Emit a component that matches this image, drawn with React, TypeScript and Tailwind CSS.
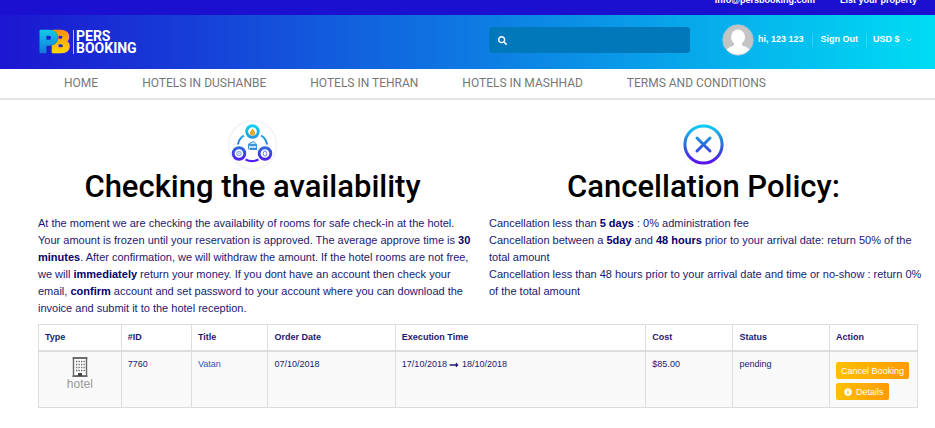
import React from 'react';
import { ChevronDown } from 'lucide-react';
import { FaInfoCircle, FaLongArrowAltRight, FaSearch } from 'react-icons/fa';

const navLinks = ['Home', 'Hotels in Dushanbe', 'Hotels in Tehran', 'Hotels in Mashhad', 'Terms and Conditions'];

const Logo: React.FC = () => (
  <a href="#" className="flex items-center gap-[3px] text-white">
    <svg width="30" height="26" viewBox="0 0 30 26" className="overflow-visible" aria-hidden="true">
      <defs>
        <linearGradient id="logoP" x1="0" y1="0" x2="0" y2="1">
          <stop offset="0.2" stopColor="#12c4e6" />
          <stop offset="1" stopColor="#1462dc" />
        </linearGradient>
        <linearGradient id="logoB" x1="0" y1="0" x2="0" y2="1">
          <stop offset="0.2" stopColor="#ff9310" />
          <stop offset="0.8" stopColor="#ffd500" />
        </linearGradient>
      </defs>
      <g fontFamily="Roboto, sans-serif" fontWeight="700" fontSize="29" strokeWidth="2.500" strokeLinejoin="round">
        <text x="11" y="23" fill="url(#logoB)" stroke="url(#logoB)">B</text>
        <text x="-1" y="23" fill="url(#logoP)" stroke="url(#logoP)">P</text>
      </g>
    </svg>
    <span className="border-l border-white/70 pl-[2px] font-[Roboto,sans-serif] text-[14px] font-bold leading-[12px]">
      PERS
      <br />
      BOOKING
    </span>
  </a>
);

const Avatar: React.FC = () => (
  <svg width="32" height="32" viewBox="0 0 32 32" aria-hidden="true">
    <defs>
      <clipPath id="avatarClip">
        <circle cx="16" cy="16" r="15" />
      </clipPath>
    </defs>
    <circle cx="16" cy="16" r="15" fill="#c4c4c4" />
    <g clipPath="url(#avatarClip)" fill="#fff">
      <ellipse cx="16" cy="13" rx="7" ry="7.5" />
      <path d="M12 17h8v4.500c5 1.300 8 3.500 9 8V34H3v-4.500c1-4.500 4-6.700 9-8z" />
    </g>
    <circle cx="16" cy="16" r="15.300" fill="none" stroke="#b9c9d0" strokeWidth="0.800" />
  </svg>
);

const NetworkIcon: React.FC = () => (
  <svg width="50" height="50" viewBox="0 0 50 50" fill="none" aria-hidden="true">
    <defs>
      <linearGradient id="network" gradientUnits="userSpaceOnUse" x1="0" y1="5" x2="0" y2="43">
        <stop offset="0" stopColor="#10d4f2" />
        <stop offset="0.550" stopColor="#2a70d8" />
        <stop offset="1" stopColor="#5a10f0" />
      </linearGradient>
    </defs>
    <circle cx="24.500" cy="25" r="24" stroke="#f5f5f8" strokeWidth="2" />
    <g stroke="url(#network)" strokeWidth="2.900">
      <circle cx="24.500" cy="11.500" r="5.800" />
      <circle cx="11" cy="33.500" r="5.800" />
      <circle cx="37" cy="33.500" r="5.800" />
      <path d="M16 15.500c-3.500 2-5.500 5-6 9M33 15.500c3.500 2 5.500 5 6 9M17.500 39.500c4 2 9 2 13 0" strokeWidth="2" />
    </g>
    <path d="M24.500 8.500l2.500 3.500a2.700 2.700 0 1 1-5 0z" fill="#e5a72c" />
    <path d="M20.500 24l5-2.500 3 2.500v5h-8z" fill="#bfe2f5" stroke="#3b9ae0" />
    <path d="M21 25h7M22 29h7" stroke="#2478ce" strokeWidth="1.500" />
    <circle cx="11" cy="33.500" r="2.300" fill="#cfe0fa" stroke="#83a6e6" />
    <ellipse cx="37" cy="33.500" rx="1.800" ry="2.500" stroke="#6f80e4" />
  </svg>
);

const CancelIcon: React.FC = () => (
  <svg width="50" height="50" viewBox="0 0 50 50" fill="none" aria-hidden="true">
    <defs>
      <linearGradient id="cancel" gradientUnits="userSpaceOnUse" x1="0" y1="5" x2="0" y2="45">
        <stop offset="0" stopColor="#10d0f2" />
        <stop offset="0.500" stopColor="#2b6ad8" />
        <stop offset="1" stopColor="#5d08f0" />
      </linearGradient>
    </defs>
    <circle cx="24.500" cy="24.500" r="23.500" stroke="#f7f7f9" />
    <circle cx="24.500" cy="24.500" r="18.600" stroke="url(#cancel)" strokeWidth="3" />
    <path d="M18 18l13 13M31 18l-13 13" stroke="url(#cancel)" strokeWidth="3" strokeLinecap="round" />
  </svg>
);

const HotelIcon: React.FC = () => (
  <svg width="16" height="20" viewBox="0 0 16 20" aria-hidden="true">
    <path d="M1.500 1h13v18h-13z" fill="#fff" stroke="#666" strokeWidth="1.400" />
    <path d="M0.500 1h15M0.500 19.200h15" stroke="#666" strokeWidth="1.500" />
    <path d="M4 4.500h9M4 7.500h9M4 10.500h9M4 13.500h9" stroke="#666" strokeWidth="1.300" strokeDasharray="1.300 1.200" />
    <path d="M6 16h4v3H6z" fill="#444" />
  </svg>
);

const Header: React.FC = () => (
  <header>
    <div className="flex h-[15px] items-start justify-end gap-[25px] overflow-hidden bg-[#1c10d0] pr-[18px] text-[9px] font-bold leading-[10px] text-white">
      <a href="#" className="-mt-[5px]">info@persbooking.com</a>
      <a href="#" className="-mt-[5px]">List your property</a>
    </div>

    <div className="flex h-[54px] items-center justify-between bg-linear-to-r/srgb from-[#1c16d0] to-[#00dcf4] pl-10 pr-[22px]">
      <Logo />
      <div className="flex items-center gap-8 pb-1">
        <label className="flex h-[26px] w-[201px] items-center gap-2 rounded-[3px] bg-[#0078ba] px-[9px] text-white">
          <FaSearch size={9} />
          <input type="search" aria-label="Search" className="min-w-0 flex-1 bg-transparent text-[9px] outline-none" />
        </label>
        <div className="flex items-center text-[9px] font-bold text-white">
          <a href="#" className="flex items-center gap-1 pr-2">
            <Avatar />
            hi, 123 123
          </a>
          <a href="#" className="border-l border-white/20 px-2">Sign Out</a>
          <div className="flex items-center border-l border-white/20 pl-[6px]">
            <select aria-label="Currency" className="w-8 appearance-none bg-transparent outline-none">
              <option>USD $</option>
            </select>
            <ChevronDown size={8} />
          </div>
        </div>
      </div>
    </div>

    <nav className="flex h-[31px] items-center gap-11 border-b-2 border-[#e4e4e4] pb-px pl-16 font-[Roboto,sans-serif] text-[12px] uppercase text-[#777]">
      {navLinks.map((link) => (
        <a key={link} href="#" className="whitespace-nowrap">{link}</a>
      ))}
    </nav>
  </header>
);

interface InfoBlockProps {
  icon: React.ReactNode;
  title: string;
  children: React.ReactNode;
}

const InfoBlock: React.FC<InfoBlockProps> = ({ icon, title, children }) => (
  <section>
    <div className="flex justify-center">{icon}</div>
    <h2 className="text-center font-[Roboto,sans-serif] text-[31px] font-medium leading-[34px] text-black">{title}</h2>
    <div className="-mr-[10px] mt-[11px] text-[11px] leading-[17px] [&_b]:text-[#06006c]">{children}</div>
  </section>
);

const BookingTable: React.FC = () => (
  <table className="w-full table-fixed border-collapse text-left text-[9px] leading-[14px]">
    <colgroup>
      <col className="w-[9.400%]" />
      <col className="w-[8%]" />
      <col className="w-[8.700%]" />
      <col className="w-[14.500%]" />
      <col className="w-[28.500%]" />
      <col className="w-[9.900%]" />
      <col className="w-[11%]" />
      <col className="w-[10%]" />
    </colgroup>
    <thead>
      <tr className="border-b-2 border-[#ddd]">
        {['Type', '#ID', 'Title', 'Order Date', 'Execution Time', 'Cost', 'Status', 'Action'].map((name) => (
          <th key={name} className="border-x border-t border-[#ddd] px-[6px] pb-[6px] pt-[5px]">{name}</th>
        ))}
      </tr>
    </thead>
    <tbody>
      <tr className="bg-[#f9f9f9] align-top *:border *:border-[#ddd] *:px-[6px] *:pb-[7px] *:pt-[5px]">
        <td>
          <div className="flex flex-col items-center text-[12px] text-[#999]">
            <HotelIcon />
            hotel
          </div>
        </td>
        <td>7760</td>
        <td><a href="#" className="text-[#2a56c0]">Vatan</a></td>
        <td>07/10/2018</td>
        <td>17/10/2018 <FaLongArrowAltRight size={10} className="inline" /> 18/10/2018</td>
        <td>$85.00</td>
        <td>pending</td>
        <td>
          <div className="flex flex-col items-start gap-1 pt-[5px] text-white">
            <button className="h-[17px] whitespace-nowrap rounded-[2px] bg-linear-to-r/srgb from-[#ffc000] to-[#ff9a00] px-[5px]">
              Cancel Booking
            </button>
            <button className="flex h-[17px] items-center gap-1 rounded-[2px] bg-linear-to-r/srgb from-[#ffc000] to-[#ff9a00] pl-2 pr-[5px]">
              <FaInfoCircle size={8} /> Details
            </button>
          </div>
        </td>
      </tr>
    </tbody>
  </table>
);

const App: React.FC = () => {
  return (
    <div className="bg-white font-['Liberation_Sans',Arial,sans-serif] text-[#1c1870]">
      <Header />
      <main className="pl-[38px] pr-[17px] pt-5">
        <div className="grid grid-cols-2 gap-[22px] pb-[7px]">
          <InfoBlock icon={<NetworkIcon />} title="Checking the availability">
            <p>
              At the moment we are checking the availability of rooms for safe check-in at the hotel. Your amount is
              frozen until your reservation is approved. The average approve time is <b>30 minutes</b>. After
              confirmation, we will withdraw the amount. If the hotel rooms are not free, we will{' '}
              <b>immediately</b> return your money. If you dont have an account then check your email,{' '}
              <b>confirm</b> account and set password to your account where you can download the invoice and submit it
              to the hotel reception.
            </p>
          </InfoBlock>
          <InfoBlock icon={<CancelIcon />} title="Cancellation Policy:">
            <p>Cancellation less than <b>5 days</b> : 0% administration fee</p>
            <p>
              Cancellation between a <b>5day</b> and <b>48 hours</b> prior to your arrival date: return 50% of the total
              amount
            </p>
            <p>
              Cancellation less than 48 hours prior to your arrival date and time or no-show : return 0% of the total
              amount
            </p>
          </InfoBlock>
        </div>
        <BookingTable />
      </main>
    </div>
  );
};

export default App;
